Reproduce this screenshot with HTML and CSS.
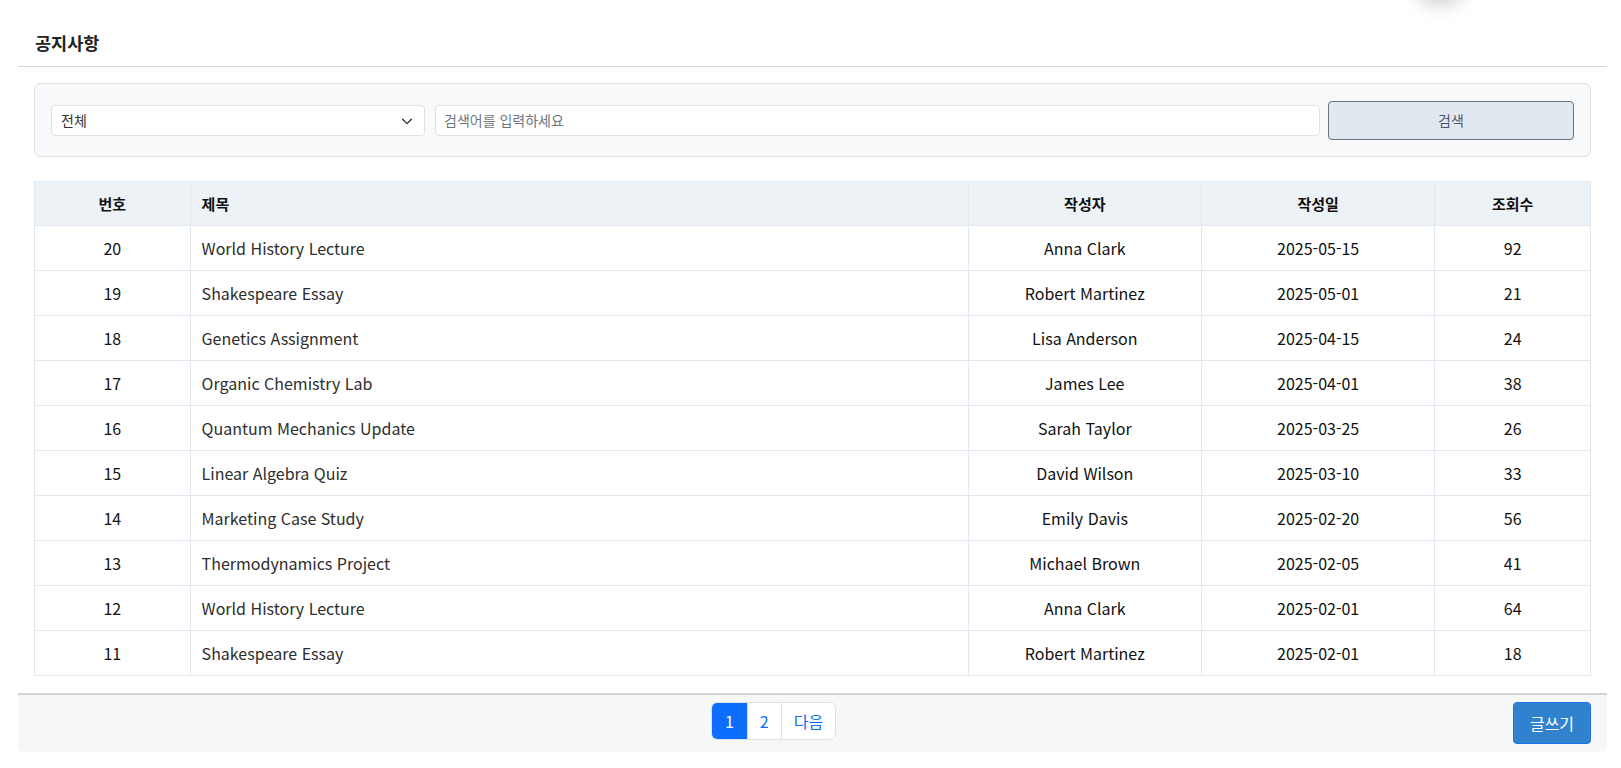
FILE: index.html
```html
<!DOCTYPE html>
<html lang="ko">
<head>
<meta charset="utf-8">
<title>공지사항</title>
<link rel="stylesheet" href="styles.css">
</head>
<body>
<div class="blob"></div>
<div class="page">
  <div class="page-head">
    <h1 class="page-title">공지사항</h1>
  </div>
  <div class="content">
    <form class="search-box">
      <div class="select-wrap">
        <span class="select-value">전체</span>
        <svg class="chev" width="14" height="14" viewBox="0 0 16 16"><path d="M3 6l5 5 5-5" fill="none" stroke="#333" stroke-width="1.6" stroke-linecap="round" stroke-linejoin="round"/></svg>
      </div>
      <input class="search-input" type="text" placeholder="검색어를 입력하세요">
      <button class="search-btn" type="button">검색</button>
    </form>

    <table class="board">
      <thead>
        <tr>
          <th class="c-num">번호</th>
          <th class="c-title">제목</th>
          <th class="c-mid">작성자</th>
          <th class="c-mid">작성일</th>
          <th class="c-num">조회수</th>
        </tr>
      </thead>
      <tbody>
        <tr><td class="c-num">20</td><td class="c-title">World History Lecture</td><td class="c-mid">Anna Clark</td><td class="c-mid">2025-05-15</td><td class="c-num">92</td></tr>
        <tr><td class="c-num">19</td><td class="c-title">Shakespeare Essay</td><td class="c-mid">Robert Martinez</td><td class="c-mid">2025-05-01</td><td class="c-num">21</td></tr>
        <tr><td class="c-num">18</td><td class="c-title">Genetics Assignment</td><td class="c-mid">Lisa Anderson</td><td class="c-mid">2025-04-15</td><td class="c-num">24</td></tr>
        <tr><td class="c-num">17</td><td class="c-title">Organic Chemistry Lab</td><td class="c-mid">James Lee</td><td class="c-mid">2025-04-01</td><td class="c-num">38</td></tr>
        <tr><td class="c-num">16</td><td class="c-title">Quantum Mechanics Update</td><td class="c-mid">Sarah Taylor</td><td class="c-mid">2025-03-25</td><td class="c-num">26</td></tr>
        <tr><td class="c-num">15</td><td class="c-title">Linear Algebra Quiz</td><td class="c-mid">David Wilson</td><td class="c-mid">2025-03-10</td><td class="c-num">33</td></tr>
        <tr><td class="c-num">14</td><td class="c-title">Marketing Case Study</td><td class="c-mid">Emily Davis</td><td class="c-mid">2025-02-20</td><td class="c-num">56</td></tr>
        <tr><td class="c-num">13</td><td class="c-title">Thermodynamics Project</td><td class="c-mid">Michael Brown</td><td class="c-mid">2025-02-05</td><td class="c-num">41</td></tr>
        <tr><td class="c-num">12</td><td class="c-title">World History Lecture</td><td class="c-mid">Anna Clark</td><td class="c-mid">2025-02-01</td><td class="c-num">64</td></tr>
        <tr><td class="c-num">11</td><td class="c-title">Shakespeare Essay</td><td class="c-mid">Robert Martinez</td><td class="c-mid">2025-02-01</td><td class="c-num">18</td></tr>
      </tbody>
    </table>
  </div>
  <div class="page-foot">
    <div class="pager-wrap">
      <nav class="pager">
        <a class="pg active">1</a>
        <a class="pg">2</a>
        <a class="pg">다음</a>
      </nav>
    </div>
    <button class="write-btn" type="button">글쓰기</button>
  </div>
</div>
</body>
</html>
```

FILE: styles.css
```css
* { box-sizing: border-box; }
html, body { margin: 0; padding: 0; background: #fff; }
body {
  font-family: "Noto Sans CJK KR", "Noto Sans", sans-serif;
  color: #1a202c;
  overflow: hidden;
  position: relative;
  height: 768px;
}
.blob {
  position: absolute;
  left: 1414px;
  top: -52px;
  width: 52px;
  height: 52px;
  border-radius: 50%;
  background: #fff;
  box-shadow: 0 6px 18px rgba(0,0,0,0.18);
}
.page {
  margin-left: 18px;
  width: 1589px;
}
.page-head {
  height: 67px;
  border-bottom: 1px solid #d5d8dc;
  padding: 31px 0 0 17px;
}
.page-title {
  margin: 0;
  font-size: 17.5px;
  font-weight: 700;
  line-height: 24px;
  color: #222;
}
.content {
  padding: 16px 16px 0 16px;
}
.search-box {
  display: flex;
  align-items: center;
  background: #f8f9fa;
  border: 1px solid #dee2e6;
  border-radius: 6px;
  padding: 16px;
  height: 74px;
  margin: 0;
}
.select-wrap {
  width: 374px;
  height: 31px;
  background: #fff;
  border: 1px solid #dee2e6;
  border-radius: 4px;
  display: flex;
  align-items: center;
  justify-content: space-between;
  padding: 0 10px 0 9px;
  font-size: 14px;
  color: #333;
}
.chev { margin-top: 1px; }
.search-input {
  flex: 1;
  height: 31px;
  margin-left: 10px;
  border: 1px solid #dee2e6;
  border-radius: 4px;
  background: #fff;
  padding: 0 8px;
  font-family: inherit;
  font-size: 14px;
  color: #222;
  outline: none;
}
.search-input::placeholder { color: #6c757d; }
.search-btn {
  width: 246px;
  height: 39px;
  margin-left: 8px;
  background: #e2e8f0;
  border: 1px solid #6b7280;
  border-radius: 4px;
  font-family: inherit;
  font-size: 14px;
  color: #4a5568;
}
.board {
  width: 100%;
  margin-top: 24px;
  border-collapse: collapse;
  table-layout: fixed;
  font-size: 16px;
}
.board th, .board td {
  border: 1px solid #e2e8f0;
  padding: 0 11px;
  vertical-align: middle;
}
.board thead th {
  background: #edf2f7;
  font-weight: 700;
  color: #111;
  font-size: 15px;
  height: 44px;
}
.board tbody td { height: 45px; }
.c-num { width: 10%; text-align: center; }
.c-title { width: 50%; text-align: left; }
.c-mid { width: 15%; text-align: center; }
.board td.c-num, .board td.c-mid { color: #111; }
.board td.c-title { color: #2d2d2d; }
.page-foot {
  margin-top: 17px;
  height: 59px;
  background: #f7f7f7;
  border-top: 2px solid #d3d3d3;
  border-radius: 0 0 6px 6px;
  display: flex;
  align-items: flex-start;
  padding: 7px 16px 0 16px;
}
.pager-wrap {
  flex: 1;
  display: flex;
  justify-content: center;
}
.pager {
  display: flex;
  height: 38px;
  border: 1px solid #dee2e6;
  border-radius: 6px;
  overflow: hidden;
  background: #fff;
}
.pg {
  display: flex;
  align-items: center;
  justify-content: center;
  height: 100%;
  padding: 0 12px;
  font-size: 16px;
  color: #0d6efd;
  border-left: 1px solid #dee2e6;
}
.pg:first-child { border-left: none; }
.pg.active {
  background: #0d6efd;
  color: #fff;
  width: 35px;
}
.write-btn {
  width: 78px;
  height: 42px;
  background: #3182ce;
  border: 1px solid #1a73e8;
  border-radius: 4px;
  color: #fff;
  font-family: inherit;
  font-size: 16px;
}
```
